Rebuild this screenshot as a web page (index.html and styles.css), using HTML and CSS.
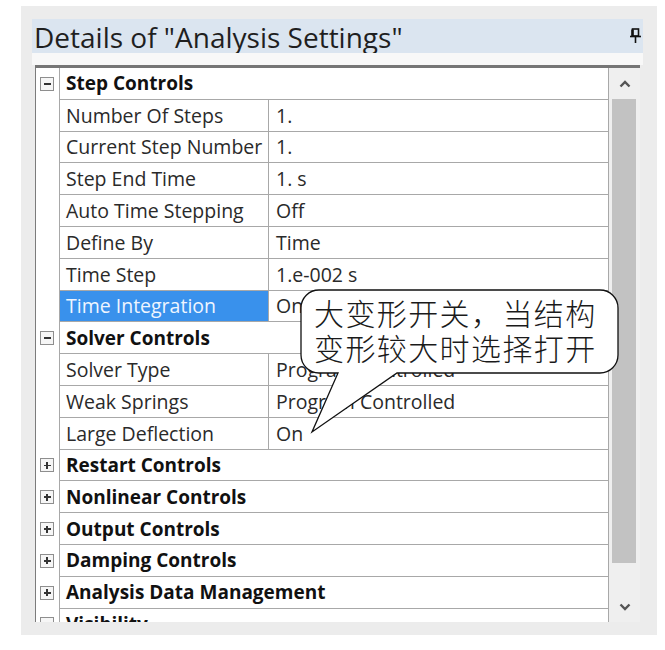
FILE: index.html
```html
<!DOCTYPE html>
<html>
<head>
<meta charset="utf-8">
<link rel="stylesheet" href="styles.css">
</head>
<body>
<div class="panel">
  <div class="header">
    <span class="title">Details of "Analysis Settings"</span>
    <svg class="pin" width="11" height="15" viewBox="0 0 11 15"><rect x="2.5" y="1" width="6" height="7" fill="none" stroke="#111" stroke-width="1.6"/><line x1="2.5" y1="1.5" x2="2.5" y2="8" stroke="#111" stroke-width="2.5"/><line x1="0" y1="8.5" x2="11" y2="8.5" stroke="#111" stroke-width="1.6"/><line x1="5.5" y1="9" x2="5.5" y2="15" stroke="#111" stroke-width="1.6"/></svg>
  </div>
  <div class="strip"></div>
  <div class="grid">
    <div class="rows">
      <div class="row group"><div class="tree"><span class="box minus"></span></div><div class="name">Step Controls</div></div>
      <div class="row"><div class="tree"></div><div class="name">Number Of Steps</div><div class="value">1.</div></div>
      <div class="row"><div class="tree"></div><div class="name">Current Step Number</div><div class="value">1.</div></div>
      <div class="row"><div class="tree"></div><div class="name">Step End Time</div><div class="value">1. s</div></div>
      <div class="row"><div class="tree"></div><div class="name">Auto Time Stepping</div><div class="value">Off</div></div>
      <div class="row"><div class="tree"></div><div class="name">Define By</div><div class="value">Time</div></div>
      <div class="row"><div class="tree"></div><div class="name">Time Step</div><div class="value">1.e-002 s</div></div>
      <div class="row"><div class="tree"></div><div class="name selected">Time Integration</div><div class="value">On</div></div>
      <div class="row group"><div class="tree"><span class="box minus"></span></div><div class="name">Solver Controls</div></div>
      <div class="row"><div class="tree"></div><div class="name">Solver Type</div><div class="value">Program Controlled</div></div>
      <div class="row"><div class="tree"></div><div class="name">Weak Springs</div><div class="value">Program Controlled</div></div>
      <div class="row"><div class="tree"></div><div class="name">Large Deflection</div><div class="value">On</div></div>
      <div class="row group"><div class="tree"><span class="box plus"></span></div><div class="name">Restart Controls</div></div>
      <div class="row group"><div class="tree"><span class="box plus"></span></div><div class="name">Nonlinear Controls</div></div>
      <div class="row group"><div class="tree"><span class="box plus"></span></div><div class="name">Output Controls</div></div>
      <div class="row group"><div class="tree"><span class="box plus"></span></div><div class="name">Damping Controls</div></div>
      <div class="row group"><div class="tree"><span class="box plus"></span></div><div class="name">Analysis Data Management</div></div>
      <div class="row group"><div class="tree"><span class="box minus"></span></div><div class="name">Visibility</div></div>
    </div>
    <div class="scrollbar">
      <div class="sb-btn"><svg width="12" height="8" viewBox="0 0 12 8"><polyline points="1.5,6.5 6,2 10.5,6.5" fill="none" stroke="#555" stroke-width="2.4"/></svg></div>
      <div class="sb-track"><div class="sb-thumb"></div></div>
      <div class="sb-btn"><svg width="12" height="8" viewBox="0 0 12 8"><polyline points="1.5,1.5 6,6 10.5,1.5" fill="none" stroke="#555" stroke-width="2.4"/></svg></div>
    </div>
  </div>
</div>
<div class="callout">
  <svg class="callout-shape" width="330" height="152" viewBox="0 0 330 152"><path d="M24,5 H305 A18,18 0 0 1 323,23 V70 A18,18 0 0 1 305,88 H102 L17,147 L43,88 H24 A18,18 0 0 1 6,70 V23 A18,18 0 0 1 24,5 Z" fill="#fff" stroke="#111" stroke-width="1.3"/></svg>
  <div class="callout-text">大变形开关，当结构<br>变形较大时选择打开</div>
</div>
</body>
</html>
```

FILE: styles.css
```css
html, body {
  margin: 0;
  padding: 0;
  background: #ffffff;
}
body {
  position: relative;
  width: 665px;
  height: 650px;
  font-family: "Open Sans", "Noto Sans", sans-serif;
  color: #222;
}
.panel {
  box-sizing: border-box;
  margin: 6px 0 0 21px;
  width: 636px;
  height: 629px;
  background: #ececec;
  padding: 13px 14px 13px 11px;
  display: flex;
  flex-direction: column;
}
.header {
  height: 34px;
  flex: none;
  background: #dbe5f0;
  display: flex;
  align-items: center;
  justify-content: space-between;
  padding: 0 2px 0 2px;
}
.title {
  font-size: 28px;
  color: #1f1f1f;
  line-height: 34px;
  margin-top: 2px;
}
.pin {
  display: block;
  margin-top: -2px;
}
.strip {
  height: 12px;
  flex: none;
  background: #f8f8f8;
}
.grid {
  flex: 1;
  min-height: 0;
  display: flex;
  margin: 0 3px;
  border-top: 3px solid #767676;
}
.rows {
  flex: 1;
  overflow: hidden;
  background: #fff;
  border-left: 1px solid #7c7c7c;
}
.row {
  display: grid;
  grid-template-columns: 24px 209px 1fr;
  height: 31.8px;
  font-size: 19.5px;
}
.tree {
  border-right: 1px solid #a8a8a8;
  display: flex;
  align-items: center;
  justify-content: center;
}
.name, .value {
  box-sizing: border-box;
  border-bottom: 1px solid #a8a8a8;
  display: flex;
  align-items: center;
  white-space: nowrap;
  overflow: hidden;
  color: #2a2a2a;
}
.name {
  padding-left: 6px;
  border-right: 1px solid #a8a8a8;
}
.value {
  padding-left: 7px;
  border-right: 1px solid #a8a8a8;
}
.group .name {
  grid-column: 2 / 4;
  font-weight: 700;
  font-size: 19px;
  color: #111;
}
.name.selected {
  background: #3991ec;
  color: #eef5ff;
}
.box {
  box-sizing: border-box;
  width: 14px;
  height: 14px;
  border: 1px solid #8e8e8e;
  background: #f6f6f6;
  position: relative;
  margin-left: -1px;
}
.box::before {
  content: "";
  position: absolute;
  left: 2.5px;
  top: 5.2px;
  width: 7px;
  height: 1.8px;
  background: #333;
}
.box.plus::after {
  content: "";
  position: absolute;
  left: 5.1px;
  top: 2.6px;
  width: 1.8px;
  height: 7px;
  background: #333;
}
.scrollbar {
  width: 31px;
  flex: none;
  background: #efefef;
  display: flex;
  flex-direction: column;
}
.sb-btn {
  height: 31px;
  flex: none;
  display: flex;
  align-items: center;
  justify-content: center;
}
.sb-track {
  flex: 1;
  padding: 0 4px 0 3px;
}
.sb-thumb {
  height: 464px;
  background: #c2c2c2;
}
.callout {
  position: absolute;
  left: 295px;
  top: 285px;
  width: 330px;
  height: 152px;
}
.callout-shape {
  position: absolute;
  left: 0;
  top: 0;
}
.callout-text {
  position: relative;
  padding: 10px 0 0 19px;
  font-family: "Noto Sans CJK SC", "Noto Sans", sans-serif;
  font-weight: 300;
  font-size: 30px;
  line-height: 35px;
  letter-spacing: 1.4px;
  color: #1a1a1a;
}
```
